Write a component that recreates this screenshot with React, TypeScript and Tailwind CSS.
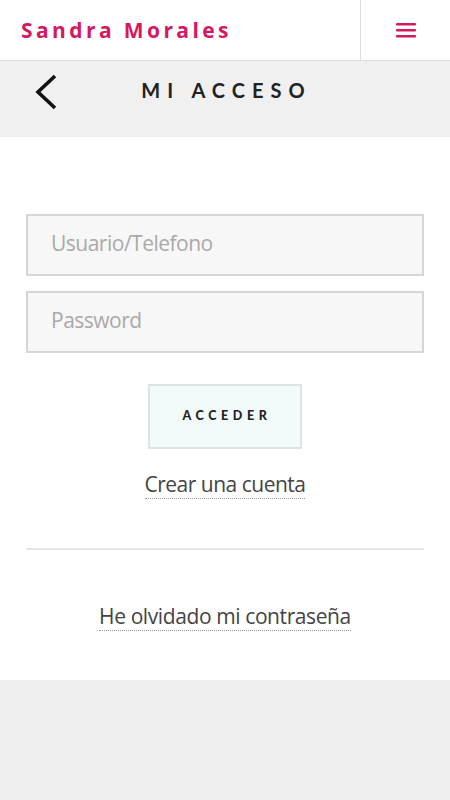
import React from "react";

export default function App() {
  return (
    <div className="w-[450px] min-h-[800px] bg-[#efefef] flex flex-col" style={{ fontFamily: '"Lato", "Open Sans", sans-serif' }}>
      <header className="h-[61px] bg-white border-b border-[#dedede] flex">
        <div className="flex-1 flex items-center pl-[21px]">
          <span className="text-[21px] font-bold tracking-[3.4px] text-[#d6185f] leading-none" style={{ fontFamily: '"Open Sans", sans-serif' }}>Sandra Morales</span>
        </div>
        <div className="w-[90px] border-l border-[#dedede] flex items-center justify-center">
          <svg width="20" height="16" viewBox="0 0 20 16">
            <rect x="0" y="1" width="20" height="2.4" rx="1" fill="#d6185f" />
            <rect x="0" y="7" width="20" height="2.4" rx="1" fill="#d6185f" />
            <rect x="0" y="13" width="20" height="2.4" rx="1" fill="#d6185f" />
          </svg>
        </div>
      </header>
      <div className="h-[76px] bg-[#f0f0f0] relative flex items-center justify-center">
        <svg className="absolute left-[33px] top-[12px]" width="26" height="38" viewBox="0 0 26 38">
          <polyline points="22,3 5,19 22,35" fill="none" stroke="#111" strokeWidth="3.6" strokeLinejoin="miter" />
        </svg>
        <span className="text-[20px] font-bold tracking-[7px] text-[#222] -mt-[18px] ml-[3px]">MI ACCESO</span>
      </div>
      <main className="bg-white px-[26px] pt-[77px] pb-[49px] flex flex-col">
        <div className="h-[62px] bg-[#f7f7f7] border-2 border-[#d6d6d6] flex items-center pl-[23px]">
          <span className="text-[21px] text-[#a9a9a9] -mt-[3px]" style={{ fontFamily: '"Open Sans", sans-serif', letterSpacing: '-0.5px' }}>Usuario/Telefono</span>
        </div>
        <div className="h-[62px] mt-[15px] bg-[#f7f7f7] border-2 border-[#d6d6d6] flex items-center pl-[23px]">
          <span className="text-[21px] text-[#a9a9a9] -mt-[3px]" style={{ fontFamily: '"Open Sans", sans-serif', letterSpacing: '-0.5px' }}>Password</span>
        </div>
        <div className="flex justify-center mt-[31px]">
          <div className="w-[154px] h-[65px] bg-[#f3fbfa] border-2 border-[#dde3e2] flex items-center justify-center">
            <span className="text-[12.5px] font-black tracking-[4.6px] text-[#222] ml-[4px]">ACCEDER</span>
          </div>
        </div>
        <div className="flex justify-center mt-[22px]">
          <span className="text-[21px] text-[#444] border-b border-dotted border-[#999] leading-[27px]" style={{ fontFamily: '"Open Sans", sans-serif', letterSpacing: '-0.5px' }}>Crear una cuenta</span>
        </div>
        <div className="h-[2px] bg-[#e6e6e6] mt-[49px]" />
        <div className="flex justify-center mt-[53px]">
          <span className="text-[21px] text-[#444] border-b border-dotted border-[#999] leading-[27px]" style={{ fontFamily: '"Open Sans", sans-serif', letterSpacing: '-0.4px' }}>He olvidado mi contraseña</span>
        </div>
      </main>
      <div className="flex-1 bg-[#efefef]" />
    </div>
  );
}
